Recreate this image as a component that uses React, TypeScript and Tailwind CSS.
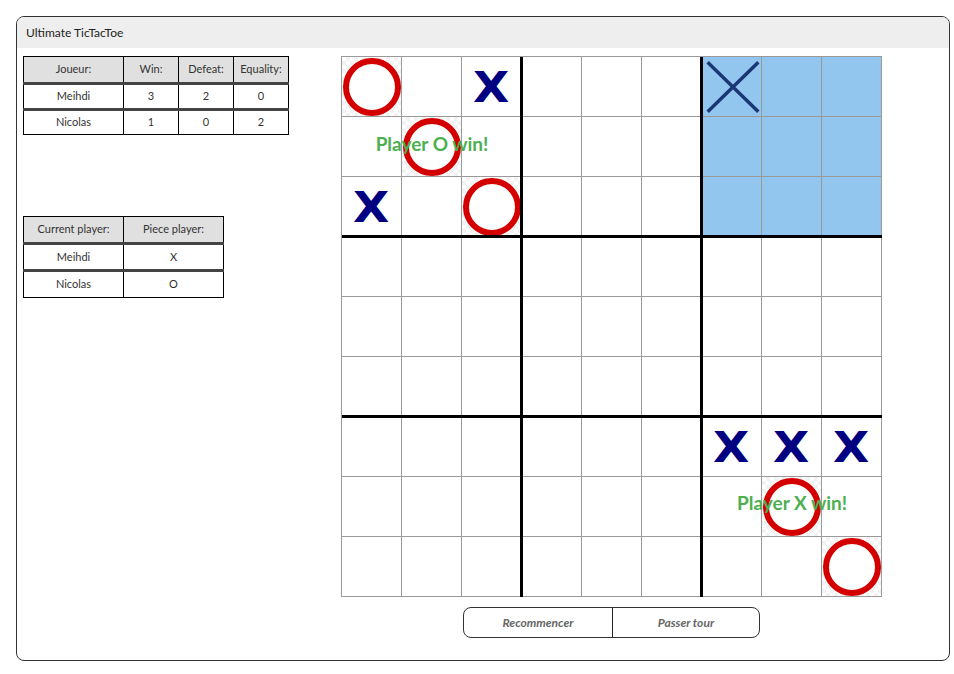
import React from 'react';

const font = { fontFamily: 'Lato, "Noto Sans", sans-serif' };

type Piece = 'X' | 'O' | 'x' | null;

const pieces: Record<string, Piece> = {
  '0-0': 'O',
  '1-1': 'O',
  '2-2': 'O',
  '7-7': 'O',
  '8-8': 'O',
  '0-2': 'X',
  '2-0': 'X',
  '6-6': 'X',
  '6-7': 'X',
  '6-8': 'X',
  '0-6': 'x',
};

function Cell({ r, c }: { r: number; c: number }) {
  const p = pieces[`${r}-${c}`] ?? null;
  const blue = r < 3 && c >= 6;
  let bg = 'bg-white';
  if (blue) bg = 'bg-[#93c6ef]';
  else if (p === 'O')
    bg = 'bg-[image:conic-gradient(#f2f2f2_25%,#ffffff_0_50%,#f2f2f2_0_75%,#ffffff_0)] bg-[length:8px_8px]';

  return (
    <div className={`w-[60px] h-[60px] border-r border-b border-[#9a9a9a] flex items-center justify-center ${bg}`}>
      {p === 'O' && <div className="w-[58px] h-[58px] rounded-full border-[6px] border-[#d40000] bg-white" />}
      {p === 'X' && (
        <span
          className="text-[42px] leading-none font-bold text-[#000080] mt-[2px] scale-x-[1.12]"
          style={{ fontFamily: '"DejaVu Sans", sans-serif' }}
        >
          X
        </span>
      )}
      {p === 'x' && (
        <svg width="60" height="60" viewBox="0 0 60 60">
          <path d="M7 6 L56 54 M56 6 L7 54" stroke="#1b3675" strokeWidth="3.5" strokeLinecap="square" />
        </svg>
      )}
    </div>
  );
}

function Board() {
  const rows = Array.from({ length: 9 }, (_, i) => i);
  return (
    <div className="relative w-[541px] h-[541px] border-l border-t border-[#9a9a9a] grid grid-cols-9">
      {rows.map((r) => rows.map((c) => <Cell key={`${r}-${c}`} r={r} c={c} />))}
      {/* thick sub-board separators */}
      <div className="absolute top-0 bottom-0 left-[178px] w-[3px] bg-black" />
      <div className="absolute top-0 bottom-0 left-[358px] w-[3px] bg-black" />
      <div className="absolute left-0 right-0 top-[178px] h-[3px] bg-black" />
      <div className="absolute left-0 right-0 top-[358px] h-[3px] bg-black" />
      <div
        className="absolute left-0 top-[77px] w-[180px] text-center text-[19px] font-bold text-[#4caf50] leading-none"
        style={font}
      >
        Player O win!
      </div>
      <div
        className="absolute left-[360px] top-[436px] w-[180px] text-center text-[19px] font-bold text-[#4caf50] leading-none"
        style={font}
      >
        Player X win!
      </div>
    </div>
  );
}

function ScoreTable() {
  const rows = [
    ['Meihdi', '3', '2', '0'],
    ['Nicolas', '1', '0', '2'],
  ];
  return (
    <table className="border-collapse text-[11px] text-[#333] w-[266px]">
      <thead>
        <tr className="bg-[#e0e0e0] h-[27px]">
          <th className="font-normal border border-black border-b-[3px] border-b-[#444] w-[100px]">Joueur:</th>
          <th className="font-normal border border-black border-b-[3px] border-b-[#444] w-[55px]">Win:</th>
          <th className="font-normal border border-black border-b-[3px] border-b-[#444] w-[55px]">Defeat:</th>
          <th className="font-normal border border-black border-b-[3px] border-b-[#444]">Equality:</th>
        </tr>
      </thead>
      <tbody>
        {rows.map((row, i) => (
          <tr key={row[0]} className={i === 0 ? 'h-[26px]' : 'h-[25px]'}>
            {row.map((v, j) => (
              <td
                key={j}
                className={`text-center border border-black ${i === 0 ? 'border-b-[3px] border-b-[#444]' : ''}`}
              >
                {v}
              </td>
            ))}
          </tr>
        ))}
      </tbody>
    </table>
  );
}

function PlayerTable() {
  const rows = [
    ['Meihdi', 'X'],
    ['Nicolas', 'O'],
  ];
  return (
    <table className="border-collapse text-[11px] text-[#333] w-[201px]">
      <thead>
        <tr className="bg-[#e0e0e0] h-[27px]">
          <th className="font-normal border border-black border-b-[3px] border-b-[#444] w-[100px]">Current player:</th>
          <th className="font-normal border border-black border-b-[3px] border-b-[#444]">Piece player:</th>
        </tr>
      </thead>
      <tbody>
        {rows.map((row, i) => (
          <tr key={row[0]} className="h-[27px]">
            {row.map((v, j) => (
              <td
                key={j}
                className={`text-center border border-black ${i === 0 ? 'border-b-[3px] border-b-[#444]' : ''}`}
              >
                {v}
              </td>
            ))}
          </tr>
        ))}
      </tbody>
    </table>
  );
}

export default function App() {
  return (
    <div className="w-[954px] h-[674px] bg-white pt-[16px] pl-[16px]" style={font}>
      <div className="w-[934px] h-[645px] border border-[#333] rounded-lg overflow-hidden">
        <div className="h-[31px] bg-[#eeeeee] flex items-center pl-[9px] text-[12px] text-[#222]">
          Ultimate TicTacToe
        </div>
        <div className="flex pl-[6px] pt-[8px]">
          <div className="w-[318px] flex flex-col">
            <ScoreTable />
            <div className="mt-[81px]">
              <PlayerTable />
            </div>
          </div>
          <div className="flex flex-col items-center">
            <Board />
            <div className="mt-[10px] flex h-[31px] w-[297px] border border-[#333] rounded-lg text-[12px] italic font-bold text-[#666]">
              <button className="w-[149px] border-r border-[#222] flex items-center justify-center">Recommencer</button>
              <button className="flex-1 flex items-center justify-center">Passer tour</button>
            </div>
          </div>
        </div>
      </div>
    </div>
  );
}
